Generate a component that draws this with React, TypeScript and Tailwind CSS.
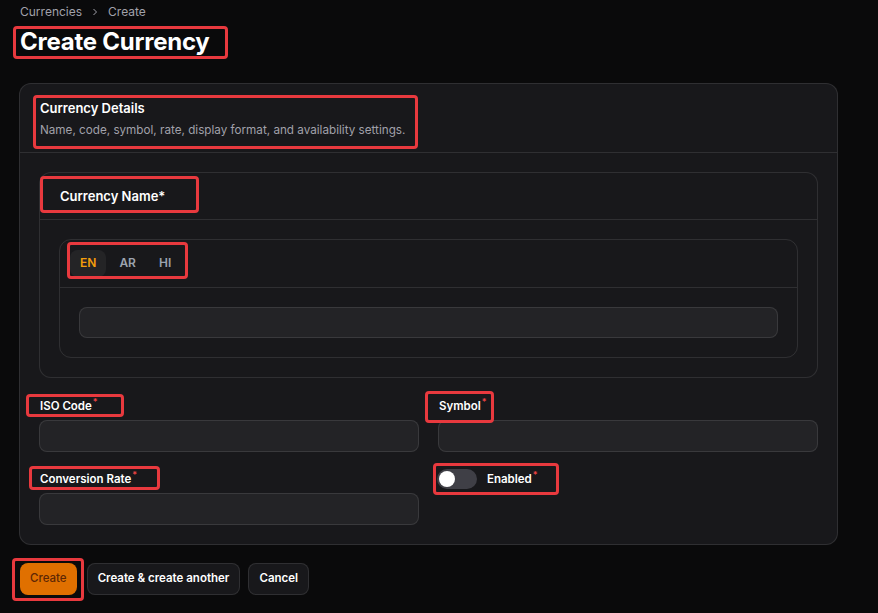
import React from "react";

const Mark: React.FC<{ box: string; className?: string; children: React.ReactNode }> = ({ box, className, children }) => (
  <div className={"relative " + (className ?? "inline-block")}>
    {children}
    <span className={"pointer-events-none absolute rounded-[4px] border-[3px] border-[#e8393e] " + box} />
  </div>
);

const Req: React.FC = () => <sup className="ml-px text-[9px] text-[#ef4444]">*</sup>;

const Field: React.FC<{ label: string; box: string }> = ({ label, box }) => (
  <div className="flex flex-col gap-1">
    <Mark box={box} className="w-fit">
      <label className="block pl-px text-[11.5px] font-semibold leading-5 text-white">
        {label}
        <Req />
      </label>
    </Mark>
    <div className="h-8 rounded-lg border border-white/10 bg-[#232326]" />
  </div>
);

const App: React.FC = () => {
  return (
    <div className="min-h-screen bg-[#0a0a0b] pl-[19px] pt-1 font-['Inter',sans-serif]">
      <nav className="flex items-center gap-2 pl-px text-[12px] leading-4 text-[#a1a1aa]">
        <span>Currencies</span>
        <svg width="10" height="10" viewBox="0 0 20 20" fill="none" stroke="currentColor" strokeWidth="2">
          <path d="M7 4l6 6-6 6" />
        </svg>
        <span>Create</span>
      </nav>

      <Mark box="-left-[7px] -right-[18px] top-[0px] -bottom-[1px]" className="mt-[6px] ml-px inline-block">
        <h1 className="text-[24px] font-bold leading-8 tracking-[-0.01em] text-white">Create Currency</h1>
      </Mark>

      <section className="mt-[25px] w-[819px] rounded-xl border border-white/10 bg-[#18181b]">
        <header className="border-b border-white/10 px-5 pb-3 pt-3">
          <Mark box="-left-[7px] -right-[13px] -top-[1px] -bottom-[9px]" className="w-fit">
            <h2 className="text-[13px] font-semibold leading-6 text-white">Currency Details</h2>
            <p className="text-[11.7px] leading-5 text-[#a1a1aa]">
              Name, code, symbol, rate, display format, and availability settings.
            </p>
          </Mark>
        </header>

        <div className="flex flex-col gap-[18px] p-[19px]">
          <div className="rounded-xl border border-white/10 bg-[#18181b]">
            <div className="flex h-[47px] items-center border-b border-white/10 px-5 pb-[2px]">
              <Mark box="-left-[20px] -right-[34px] -top-[7px] -bottom-[6px]">
                <span className="text-[13px] font-semibold leading-5 text-white">Currency Name*</span>
              </Mark>
            </div>
            <div className="p-[19px]">
              <div className="rounded-xl border border-white/10">
                <div className="border-b border-white/10 px-[10px] pb-[10px] pt-[9px]">
                  <Mark box="-left-[3px] -right-[7px] -top-[8px] -bottom-[2px]">
                    <div className="flex gap-[3px]">
                      <button className="h-[27px] rounded-lg bg-white/5 px-[10px] text-[12px] font-semibold text-[#f59e0b]">EN</button>
                      <button className="h-[27px] rounded-lg px-[10px] text-[12px] font-semibold text-[#9ca3af]">AR</button>
                      <button className="h-[27px] rounded-lg px-[10px] text-[12px] font-semibold text-[#9ca3af]">HI</button>
                    </div>
                  </Mark>
                </div>
                <div className="p-[19px]">
                  <div className="h-[31px] rounded-lg border border-white/10 bg-[#232326]" />
                </div>
              </div>
            </div>
          </div>

          <div className="grid grid-cols-2 gap-x-[19px] gap-y-[17px]">
            <Field label="ISO Code" box="-left-[13px] -right-[26px] -top-[2px] -bottom-[1px]" />
            <Field label="Symbol" box="-left-[13px] -right-[7px] -top-[5px] -bottom-[7px]" />
            <Field label="Conversion Rate" box="-left-[10px] -right-[23px] -top-[3px] -bottom-[1px]" />
            <div>
              <Mark box="-left-[5px] -right-[21px] -top-[6px] -bottom-[6px]">
                <div className="-ml-px flex items-center gap-2.5">
                  <span className="flex h-5 w-10 items-center rounded-full bg-[#3f3f46] px-0.5">
                    <span className="h-4 w-4 rounded-full bg-white" />
                  </span>
                  <span className="text-[11.5px] font-semibold leading-5 text-white">
                    Enabled
                    <Req />
                  </span>
                </div>
              </Mark>
            </div>
          </div>
        </div>
      </section>

      <div className="mt-[18px] flex gap-2 pl-px">
        <Mark box="-left-[8px] -right-[7px] -top-[5px] -bottom-[6px]">
          <button className="h-8 rounded-lg bg-[#e07000] px-[10px] text-[11.5px] font-medium text-[#5e2705]">Create</button>
        </Mark>
        <button className="ml-[2px] h-8 rounded-lg border border-white/10 bg-[#18181b] px-[10px] text-[11.5px] font-semibold text-white">
          Create &amp; create another
        </button>
        <button className="h-8 rounded-lg border border-white/10 bg-[#18181b] px-[10px] text-[11.5px] font-semibold text-white">
          Cancel
        </button>
      </div>
    </div>
  );
};

export default App;
